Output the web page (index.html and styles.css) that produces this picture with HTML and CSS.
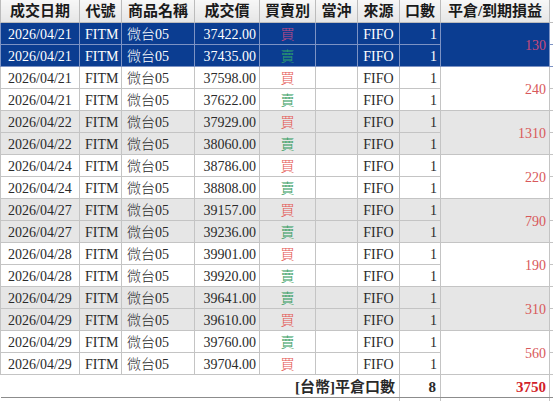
FILE: index.html
```html
<!DOCTYPE html>
<html>
<head>
<meta charset="utf-8">
<link rel="stylesheet" href="styles.css">
</head>
<body>
<table class="grid">
  <colgroup>
    <col class="c-date"><col class="c-code"><col class="c-name"><col class="c-price"><col class="c-side"><col class="c-day"><col class="c-src"><col class="c-qty"><col class="c-pl"><col class="c-extra">
  </colgroup>
  <thead>
    <tr>
      <th>成交日期</th><th>代號</th><th>商品名稱</th><th>成交價</th><th>買賣別</th><th>當沖</th><th>來源</th><th>口數</th><th>平倉/到期損益</th><th class="extra"></th>
    </tr>
  </thead>
  <tbody>
    <tr class="sel">
      <td class="date">2026/04/21</td><td class="code">FITM</td><td class="name">微台05</td><td class="price">37422.00</td><td class="side buy">買</td><td></td><td class="src">FIFO</td><td class="qty">1</td><td class="pl" rowspan="2">130</td><td class="extra"></td>
    </tr>
    <tr class="sel">
      <td class="date">2026/04/21</td><td class="code">FITM</td><td class="name">微台05</td><td class="price">37435.00</td><td class="side sell">賣</td><td></td><td class="src">FIFO</td><td class="qty">1</td><td class="extra"></td>
    </tr>
    <tr>
      <td class="date">2026/04/21</td><td class="code">FITM</td><td class="name">微台05</td><td class="price">37598.00</td><td class="side buy">買</td><td></td><td class="src">FIFO</td><td class="qty">1</td><td class="pl" rowspan="2">240</td><td class="extra"></td>
    </tr>
    <tr>
      <td class="date">2026/04/21</td><td class="code">FITM</td><td class="name">微台05</td><td class="price">37622.00</td><td class="side sell">賣</td><td></td><td class="src">FIFO</td><td class="qty">1</td><td class="extra"></td>
    </tr>
    <tr class="alt">
      <td class="date">2026/04/22</td><td class="code">FITM</td><td class="name">微台05</td><td class="price">37929.00</td><td class="side buy">買</td><td></td><td class="src">FIFO</td><td class="qty">1</td><td class="pl" rowspan="2">1310</td><td class="extra"></td>
    </tr>
    <tr class="alt">
      <td class="date">2026/04/22</td><td class="code">FITM</td><td class="name">微台05</td><td class="price">38060.00</td><td class="side sell">賣</td><td></td><td class="src">FIFO</td><td class="qty">1</td><td class="extra"></td>
    </tr>
    <tr>
      <td class="date">2026/04/24</td><td class="code">FITM</td><td class="name">微台05</td><td class="price">38786.00</td><td class="side buy">買</td><td></td><td class="src">FIFO</td><td class="qty">1</td><td class="pl" rowspan="2">220</td><td class="extra"></td>
    </tr>
    <tr>
      <td class="date">2026/04/24</td><td class="code">FITM</td><td class="name">微台05</td><td class="price">38808.00</td><td class="side sell">賣</td><td></td><td class="src">FIFO</td><td class="qty">1</td><td class="extra"></td>
    </tr>
    <tr class="alt">
      <td class="date">2026/04/27</td><td class="code">FITM</td><td class="name">微台05</td><td class="price">39157.00</td><td class="side buy">買</td><td></td><td class="src">FIFO</td><td class="qty">1</td><td class="pl" rowspan="2">790</td><td class="extra"></td>
    </tr>
    <tr class="alt">
      <td class="date">2026/04/27</td><td class="code">FITM</td><td class="name">微台05</td><td class="price">39236.00</td><td class="side sell">賣</td><td></td><td class="src">FIFO</td><td class="qty">1</td><td class="extra"></td>
    </tr>
    <tr>
      <td class="date">2026/04/28</td><td class="code">FITM</td><td class="name">微台05</td><td class="price">39901.00</td><td class="side buy">買</td><td></td><td class="src">FIFO</td><td class="qty">1</td><td class="pl" rowspan="2">190</td><td class="extra"></td>
    </tr>
    <tr>
      <td class="date">2026/04/28</td><td class="code">FITM</td><td class="name">微台05</td><td class="price">39920.00</td><td class="side sell">賣</td><td></td><td class="src">FIFO</td><td class="qty">1</td><td class="extra"></td>
    </tr>
    <tr class="alt">
      <td class="date">2026/04/29</td><td class="code">FITM</td><td class="name">微台05</td><td class="price">39641.00</td><td class="side sell">賣</td><td></td><td class="src">FIFO</td><td class="qty">1</td><td class="pl" rowspan="2">310</td><td class="extra"></td>
    </tr>
    <tr class="alt">
      <td class="date">2026/04/29</td><td class="code">FITM</td><td class="name">微台05</td><td class="price">39610.00</td><td class="side buy">買</td><td></td><td class="src">FIFO</td><td class="qty">1</td><td class="extra"></td>
    </tr>
    <tr>
      <td class="date">2026/04/29</td><td class="code">FITM</td><td class="name">微台05</td><td class="price">39760.00</td><td class="side sell">賣</td><td></td><td class="src">FIFO</td><td class="qty">1</td><td class="pl" rowspan="2">560</td><td class="extra"></td>
    </tr>
    <tr>
      <td class="date">2026/04/29</td><td class="code">FITM</td><td class="name">微台05</td><td class="price">39704.00</td><td class="side buy">買</td><td></td><td class="src">FIFO</td><td class="qty">1</td><td class="extra"></td>
    </tr>
  </tbody>
  <tfoot>
    <tr class="total">
      <td class="label" colspan="7">[台幣]平倉口數</td><td class="tqty">8</td><td class="tpl">3750</td><td class="extra"></td>
    </tr>
    <tr class="after">
      <td colspan="7" class="blank"></td><td></td><td></td><td class="blank"></td>
    </tr>
  </tfoot>
</table>
</body>
</html>
```

FILE: styles.css
```css
html, body {
  margin: 0;
  padding: 0;
  background: #ffffff;
  overflow: hidden;
}

.grid {
  border-collapse: collapse;
  table-layout: fixed;
  width: 562px;
  font-family: "Liberation Serif", "Noto Sans CJK TC", serif;
  font-size: 14px;
  color: #2a2a2a;
}

.c-date { width: 79px; }
.c-code { width: 42px; }
.c-name { width: 73px; }
.c-price { width: 65px; }
.c-side { width: 56px; }
.c-day { width: 42px; }
.c-src { width: 42px; }
.c-qty { width: 41px; }
.c-pl { width: 109px; }
.c-extra { width: 13px; }

.grid th,
.grid td {
  border: 1px solid #c4c4c4;
  padding: 0 4px;
  white-space: nowrap;
  overflow: hidden;
  line-height: 16px;
}

.grid th {
  height: 22px;
  font-size: 15px;
  font-weight: bold;
  color: #1a1a1a;
  background: linear-gradient(#f7f7f7, #e6e6e6);
  border-color: #bcbcbc;
  border-top: none;
  text-align: center;
  padding: 0;
}

.grid tbody tr {
  height: 22px;
}

.grid tbody td {
  padding-top: 2px;
  font-weight: 300;
}

.date { text-align: left; padding-left: 7px !important; }
.code { text-align: left; padding-left: 5px !important; }
.name { text-align: left; padding-left: 5px !important; }
.price { text-align: right; padding-right: 3px !important; }
.side { text-align: center; }
.src { text-align: center; }
.qty { text-align: right; padding-right: 3px !important; }
.pl {
  text-align: right;
  padding-right: 3px !important;
  color: #d8585a;
  vertical-align: middle;
}

.buy { color: #e4524e; }
.sell { color: #2f9a5c; }

.alt td {
  background: #e6e6e6;
}

.sel td {
  background: #0b3d91;
  color: #ffffff;
  border-color: #7d93c4;
}

.sel .buy { color: #c54a86; }
.sel .sell { color: #2fa36a; }
.sel .pl { color: #c84a7a; }

.extra {
  background: #ffffff !important;
}

.total {
  height: 23px;
}

.total td {
  font-weight: bold;
  font-size: 15px;
  border-bottom: 1px solid #8c8c8c;
  padding-top: 1px;
}

.total .label {
  text-align: right;
  border-left: none;
  padding-right: 4px;
}

.total .tqty {
  text-align: right;
  padding-right: 4px;
}

.total .tpl {
  text-align: right;
  color: #d21f2a;
  padding-right: 3px;
}

.after {
  height: 10px;
}

.after td {
  border-top: none;
  border-bottom: none;
}

.after .blank {
  border-left: none;
  border-right: none;
}
```
